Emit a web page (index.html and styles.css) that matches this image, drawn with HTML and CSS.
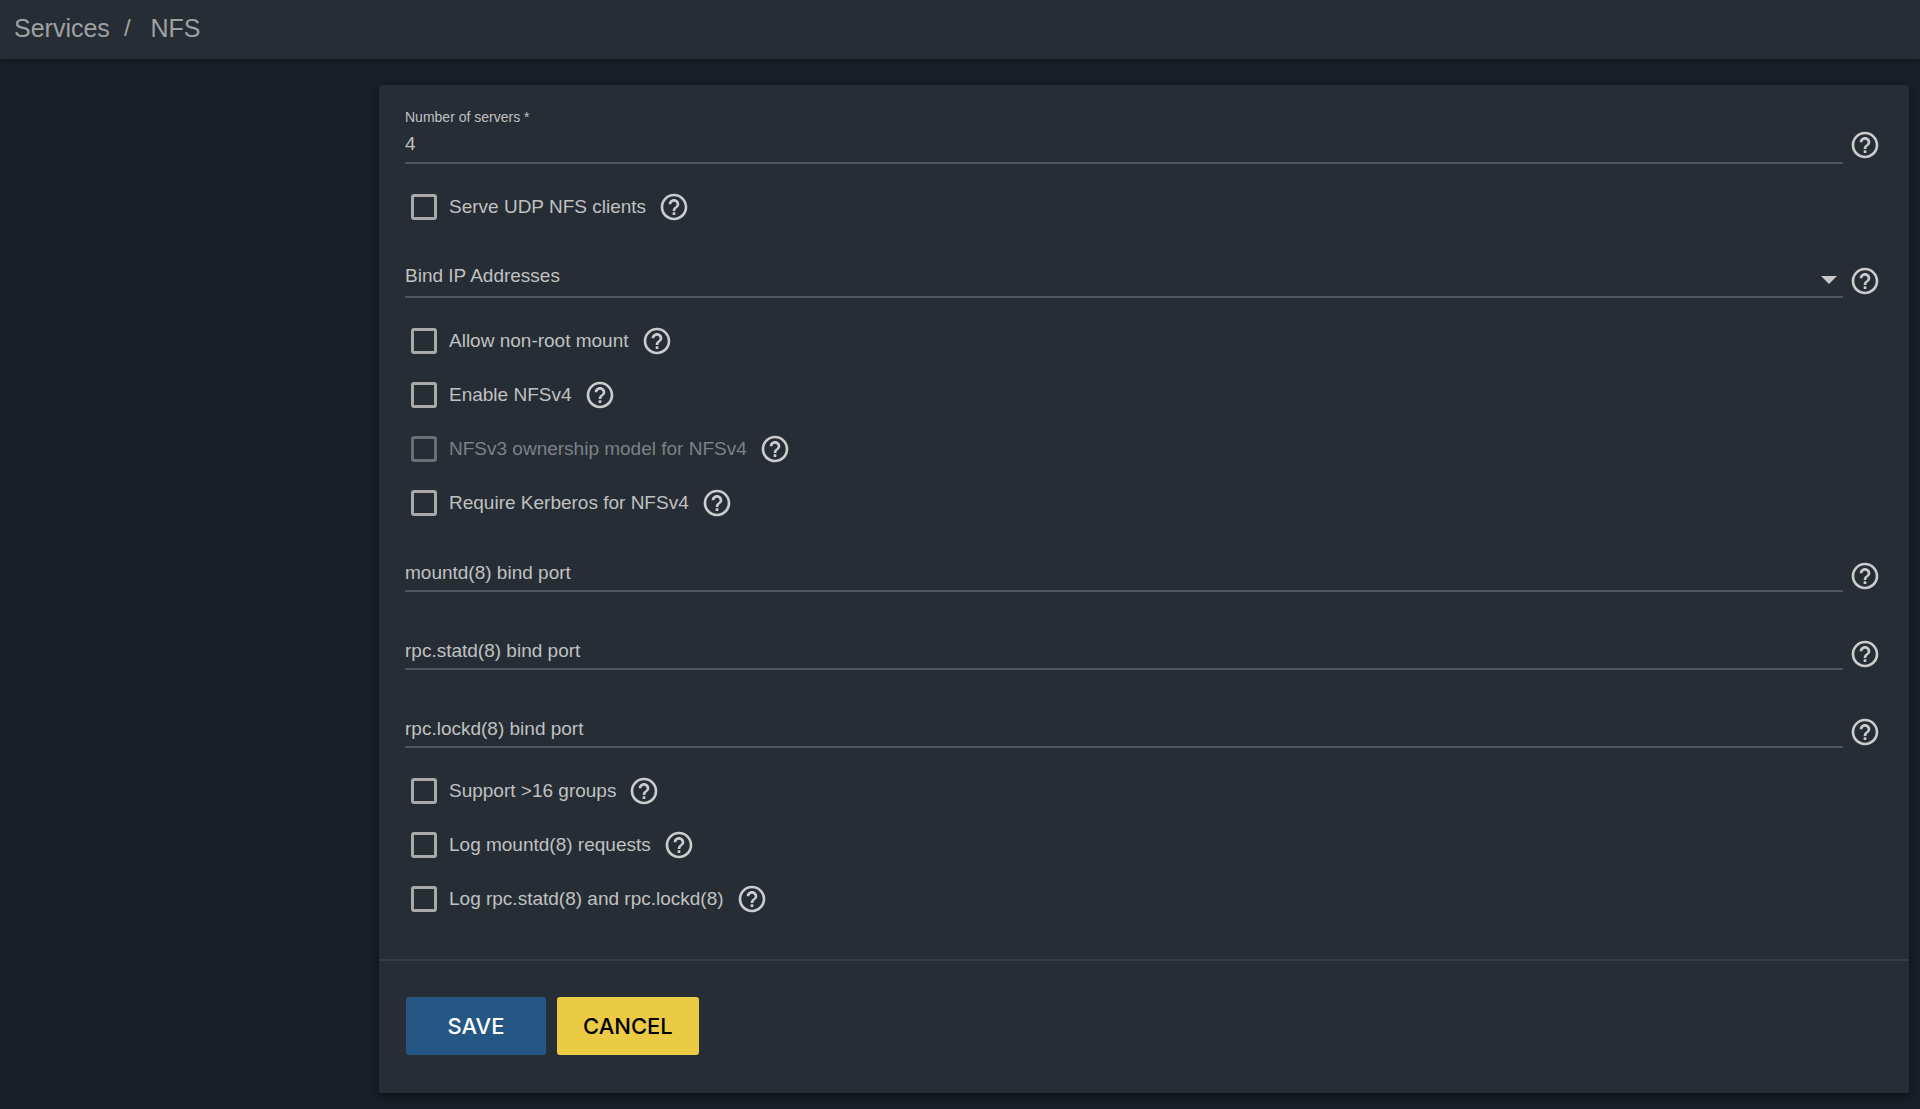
FILE: index.html
```
<!DOCTYPE html>
<html lang="en">
<head>
    <meta charset="UTF-8">
    <meta name="viewport" content="width=device-width, initial-scale=1.0">
    <title>Services / NFS</title>
    <link rel="stylesheet" href="styles.css">
</head>
<body>
    <!-- shared icons -->
    <svg class="sprite" aria-hidden="true">
        <symbol id="help" viewBox="0 0 24 24">
            <path d="M11 18h2v-2h-2v2zm1-16C6.48 2 2 6.48 2 12s4.48 10 10 10 10-4.48 10-10S17.52 2 12 2zm0 18c-4.41 0-8-3.59-8-8s3.59-8 8-8 8 3.59 8 8-3.59 8-8 8zm0-14c-2.21 0-4 1.79-4 4h2c0-1.1.9-2 2-2s2 .9 2 2c0 2-3 1.75-3 5h2c0-2.25 3-2.5 3-5 0-2.21-1.79-4-4-4z"/>
        </symbol>
    </svg>

    <header class="topbar">
        <nav class="breadcrumb" aria-label="Breadcrumb">
            <a href="#">Services</a>
            <span class="separator">/</span>
            <a href="#">NFS</a>
        </nav>
    </header>

    <main class="content">
        <form class="card">
            <div class="card-body">
                <div class="field filled">
                    <div class="control">
                        <label for="servers">Number of servers *</label>
                        <input type="text" id="servers" value="4" required>
                    </div>
                    <button type="button" class="help" aria-label="Help"><svg><use href="#help"/></svg></button>
                </div>

                <div class="check">
                    <input type="checkbox" id="udp">
                    <label for="udp">Serve UDP NFS clients</label>
                    <button type="button" class="help" aria-label="Help"><svg><use href="#help"/></svg></button>
                </div>

                <div class="field dropdown">
                    <div class="control">
                        <label for="bindip">Bind IP Addresses</label>
                        <select id="bindip">
                            <option value="" selected></option>
                        </select>
                        <svg class="arrow" viewBox="0 0 16 8"><path d="M0 0h16L8 8z"/></svg>
                    </div>
                    <button type="button" class="help" aria-label="Help"><svg><use href="#help"/></svg></button>
                </div>

                <div class="check">
                    <input type="checkbox" id="nonroot">
                    <label for="nonroot">Allow non-root mount</label>
                    <button type="button" class="help" aria-label="Help"><svg><use href="#help"/></svg></button>
                </div>
                <div class="check">
                    <input type="checkbox" id="v4">
                    <label for="v4">Enable NFSv4</label>
                    <button type="button" class="help" aria-label="Help"><svg><use href="#help"/></svg></button>
                </div>
                <div class="check">
                    <input type="checkbox" id="v3owner" disabled>
                    <label for="v3owner">NFSv3 ownership model for NFSv4</label>
                    <button type="button" class="help" aria-label="Help"><svg><use href="#help"/></svg></button>
                </div>
                <div class="check">
                    <input type="checkbox" id="kerberos">
                    <label for="kerberos">Require Kerberos for NFSv4</label>
                    <button type="button" class="help" aria-label="Help"><svg><use href="#help"/></svg></button>
                </div>

                <div class="field">
                    <div class="control">
                        <label for="mountd">mountd(8) bind port</label>
                        <input type="text" id="mountd">
                    </div>
                    <button type="button" class="help" aria-label="Help"><svg><use href="#help"/></svg></button>
                </div>
                <div class="field">
                    <div class="control">
                        <label for="statd">rpc.statd(8) bind port</label>
                        <input type="text" id="statd">
                    </div>
                    <button type="button" class="help" aria-label="Help"><svg><use href="#help"/></svg></button>
                </div>
                <div class="field">
                    <div class="control">
                        <label for="lockd">rpc.lockd(8) bind port</label>
                        <input type="text" id="lockd">
                    </div>
                    <button type="button" class="help" aria-label="Help"><svg><use href="#help"/></svg></button>
                </div>

                <div class="check">
                    <input type="checkbox" id="groups">
                    <label for="groups">Support &gt;16 groups</label>
                    <button type="button" class="help" aria-label="Help"><svg><use href="#help"/></svg></button>
                </div>
                <div class="check">
                    <input type="checkbox" id="logmountd">
                    <label for="logmountd">Log mountd(8) requests</label>
                    <button type="button" class="help" aria-label="Help"><svg><use href="#help"/></svg></button>
                </div>
                <div class="check">
                    <input type="checkbox" id="logrpc">
                    <label for="logrpc">Log rpc.statd(8) and rpc.lockd(8)</label>
                    <button type="button" class="help" aria-label="Help"><svg><use href="#help"/></svg></button>
                </div>
            </div>

            <div class="actions">
                <button type="submit" class="btn save">SAVE</button>
                <button type="button" class="btn cancel">CANCEL</button>
            </div>
        </form>
    </main>
</body>
</html>
```
FILE: styles.css
```
* {
    box-sizing: border-box;
}
body {
    margin: 0;
    background-color: #191f27;
    color: #c0c1c2;
    font-family: "Liberation Sans", Arial, sans-serif;
    font-size: 19px;
    line-height: 24px;
}
input, select, button {
    font: inherit;
    color: inherit;
}
.sprite {
    display: none;
}
.topbar {
    background: #262d34;
    padding: 12px 14px 15px;
    box-shadow: 0 2px 6px rgba(0, 0, 0, 0.25);
}
.breadcrumb {
    display: flex;
    align-items: center;
    font-size: 25px;
    line-height: 32px;
    color: #a0a1a2;
}
.breadcrumb a {
    color: inherit;
    text-decoration: none;
}
.separator {
    margin: 0 20px 0 14px;
    font-size: 24px;
}
.content {
    padding: 26px 11px 16px 379px;
}
.card {
    background: #262d34;
    border-radius: 3px;
    box-shadow: 0 3px 8px rgba(0, 0, 0, 0.4);
}
.card-body {
    padding: 17px 28px 33px 26px;
}

/* text boxes and drop-down */
.field {
    display: flex;
    align-items: flex-end;
    gap: 6px;
    height: 78px;
    padding-bottom: 16px;
}
.control {
    flex: 1;
    display: grid;
    border-bottom: 2px solid #50565e;
}
.control label,
.control input,
.control select {
    grid-area: 1 / 1;
    height: 24px;
    margin-bottom: 5px;
}
.control input,
.control select {
    width: 100%;
    padding: 0;
    border: none;
    outline: none;
    background: transparent;
    appearance: none;
}
.control label {
    pointer-events: none;
}
.filled .control label {
    font-size: 14px;
    margin-bottom: 3px;
}
.filled .control input {
    grid-area: 2 / 1;
    margin-bottom: 6px;
}
.filled .help {
    margin-bottom: 3px;
}
.dropdown {
    height: 80px;
}
.dropdown .control label,
.dropdown .control select {
    margin-bottom: 8px;
}
.dropdown .help {
    margin-bottom: 1px;
}
.arrow {
    grid-area: 1 / 1;
    justify-self: end;
    align-self: center;
    width: 16px;
    height: 8px;
    margin-right: 6px;
    fill: #c8c8c8;
    pointer-events: none;
}

/* tick boxes */
.check {
    display: flex;
    align-items: center;
    gap: 12px;
    height: 54px;
    padding-left: 6px;
}
.check input {
    appearance: none;
    width: 26px;
    height: 26px;
    margin: 0;
    border: 3px solid #a9a9a9;
    border-radius: 3px;
}
.check input:checked {
    background: #a9a9a9;
}
.check input:disabled {
    border-color: #6c7075;
}
.check input:disabled + label {
    color: #7e8185;
}

.help {
    width: 32px;
    height: 32px;
    padding: 0;
    border: none;
    background: none;
    cursor: pointer;
}
.help svg {
    display: block;
    width: 32px;
    height: 32px;
    fill: #cccccc;
}

.actions {
    display: flex;
    gap: 11px;
    padding: 36px 27px 38px;
    border-top: 2px solid #343b44;
}
.btn {
    min-width: 140px;
    height: 58px;
    padding: 0 26px;
    border: none;
    border-radius: 3px;
    font-family: Inter, "Liberation Sans", sans-serif;
    font-size: 22px;
    font-weight: 500;
    cursor: pointer;
}
.save {
    background: #255784;
    color: #fff;
}
.cancel {
    background: #ebcb44;
    color: #000;
}
```
